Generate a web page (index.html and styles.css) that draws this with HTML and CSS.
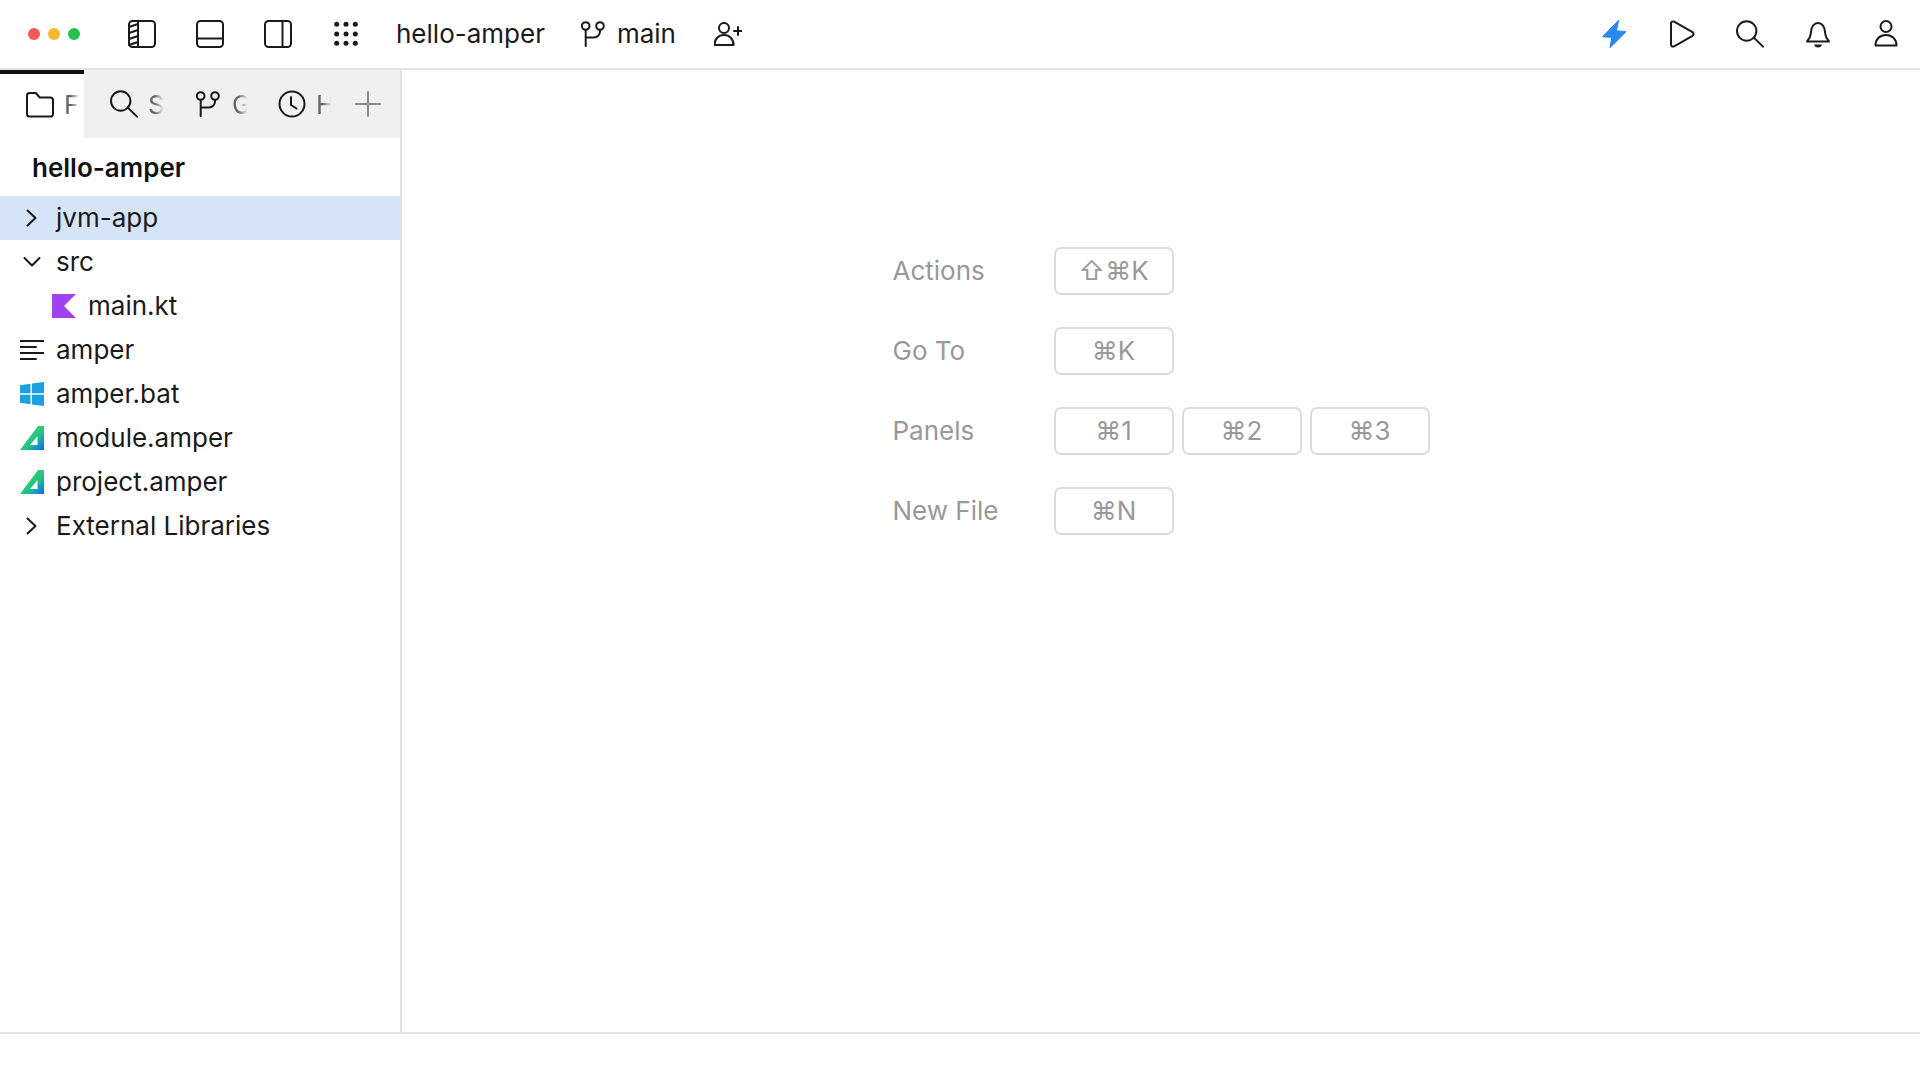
FILE: index.html
```html
<!DOCTYPE html>
<html lang="en">
<head>
<meta charset="utf-8">
<title>hello-amper</title>
<link rel="stylesheet" href="styles.css">
</head>
<body>
<svg class="defs" width="0" height="0" aria-hidden="true">
  <defs>
    <linearGradient id="amperGrad" x1="0.3" y1="0.3" x2="0.95" y2="0.95">
      <stop offset="0" stop-color="#35cf66"/>
      <stop offset="0.5" stop-color="#22bf8e"/>
      <stop offset="1" stop-color="#0f6ff8"/>
    </linearGradient>
    <symbol id="i-branch" viewBox="0 0 28 28"><circle cx="6.7" cy="6" r="3.8"/><circle cx="21" cy="6" r="3.8"/><path d="M6.7 10v16M21 10v1.5a6 6 0 0 1-6 6H6.7"/></symbol>
    <symbol id="i-search" viewBox="0 0 28 28"><circle cx="10.700" cy="11" r="9.700"/><path d="M17.800 17.600 27 26.600"/></symbol>
    <symbol id="i-amper" viewBox="0 0 24 24"><path fill="url(#amperGrad)" fill-rule="evenodd" d="M0 24 18 0h6v24ZM10 19h7.500v-9Z"/></symbol>
    <symbol id="i-right" viewBox="0 0 24 24"><path d="M7.5 4.5 15.5 12l-8 7.5"/></symbol>
  </defs>
</svg>
<div class="app">
  <header class="topbar">
    <div class="lights"><i class="light red"></i><i class="light yellow"></i><i class="light green"></i></div>
    <button class="tool">
      <svg class="ico" viewBox="0 0 28 28"><rect x="1" y="1" width="26" height="26" rx="3.5"/><path d="M10 1v26M1 7l9-3M1 13l9-3M1 19l9-3M1 25l9-3"/></svg>
    </button>
    <button class="tool">
      <svg class="ico" viewBox="0 0 28 28"><rect x="1" y="1" width="26" height="26" rx="3.5"/><path d="M1 18.500h26"/></svg>
    </button>
    <button class="tool">
      <svg class="ico" viewBox="0 0 28 28"><rect x="1" y="1" width="26" height="26" rx="3.5"/><path d="M18.500 1v26"/></svg>
    </button>
    <button class="tool">
      <svg class="ico solid" viewBox="0 0 28 28"><circle cx="4.700" cy="4.300" r="2.500"/><circle cx="14" cy="4.300" r="2.500"/><circle cx="23.300" cy="4.300" r="2.500"/><circle cx="4.700" cy="14" r="2.500"/><circle cx="14" cy="14" r="2.500"/><circle cx="23.300" cy="14" r="2.500"/><circle cx="4.700" cy="23.300" r="2.500"/><circle cx="14" cy="23.300" r="2.500"/><circle cx="23.300" cy="23.300" r="2.500"/></svg>
    </button>
    <span class="project">hello-amper</span>
    <button class="tool"><svg class="ico"><use href="#i-branch"/></svg></button>
    <span class="branch">main</span>
    <button class="tool">
      <svg class="ico" viewBox="0 0 28 28"><circle cx="10" cy="8" r="5"/><path d="M.5 25c0-6 4-10 9.500-10s9.500 4 9.500 10ZM24 7v8M20 11h8"/></svg>
    </button>
    <div class="spacer"></div>
    <button class="tool">
      <svg class="ico bolt" viewBox="0 0 28 28"><path d="M18.500.5 2.500 16.700l9.200.7-1.700 10.300L26 11.700l-9.300-1Z"/></svg>
    </button>
    <button class="tool">
      <svg class="ico" viewBox="0 0 28 28"><path d="M3 3.500c0-1.600 1.700-2.600 3.100-1.800l18.400 10.500c1.300.8 1.300 2.800 0 3.600L6.100 26.300C4.700 27.100 3 26.100 3 24.500Z"/></svg>
    </button>
    <button class="tool"><svg class="ico"><use href="#i-search"/></svg></button>
    <button class="tool">
      <svg class="ico" viewBox="0 0 28 28"><path d="M3 21.500c0-1 3-2 3.700-7.500.5-4 .5-6 2.300-8.300C10.300 4 12 3 14 3s3.700 1 5 2.700c1.800 2.300 1.800 4.300 2.300 8.300.7 5.500 3.700 6.500 3.700 7.500Z"/><path class="fill" d="M10 24.500h8c-.5 2-2 3-4 3s-3.500-1-4-3Z"/></svg>
    </button>
    <button class="tool">
      <svg class="ico" viewBox="0 0 28 28"><circle cx="14" cy="6.500" r="5.500"/><path d="M3.500 25.500c0-6.500 4.500-10.500 10.500-10.500s10.500 4 10.500 10.500Z"/></svg>
    </button>
  </header>

  <div class="workspace">
    <aside class="sidebar">
      <nav class="tabs">
        <div class="tab active">
          <svg class="ico" viewBox="0 0 28 28"><path d="M1 5.500C1 4 2 3 3.500 3h6.300l4 4.500h10.700c1.500 0 2.500 1 2.500 2.500v14c0 1.500-1 2.500-2.500 2.500h-21C2 26.500 1 25.500 1 24Z"/></svg>
          <span class="tab-label">Files</span>
        </div>
        <div class="tab"><svg class="ico"><use href="#i-search"/></svg><span class="tab-label">Search</span></div>
        <div class="tab"><svg class="ico"><use href="#i-branch"/></svg><span class="tab-label">Git</span></div>
        <div class="tab">
          <svg class="ico" viewBox="0 0 28 28"><circle cx="14" cy="14" r="12.500"/><path d="M13 7v8l5.500 3.500"/></svg>
          <span class="tab-label">History</span>
        </div>
        <div class="add">
          <svg class="ico muted" viewBox="0 0 28 28"><path d="M14 2v24M2 14h24"/></svg>
        </div>
      </nav>
      <div class="tree-title">hello-amper</div>
      <ul class="tree">
        <li class="row selected">
          <svg class="ficon stroke"><use href="#i-right"/></svg>
          <span class="row-text">jvm-app</span>
        </li>
        <li class="row">
          <svg class="ficon stroke" viewBox="0 0 24 24"><path d="M4.500 8 12 15.500 19.500 8"/></svg>
          <span class="row-text">src</span>
        </li>
        <li class="row child">
          <svg class="ficon" viewBox="0 0 24 24"><path class="kotlin" d="M0 0h24L12 12l12 12H0Z"/></svg>
          <span class="row-text">main.kt</span>
        </li>
        <li class="row">
          <svg class="ficon stroke" viewBox="0 0 24 24"><path d="M0 3h24M0 9h16M0 15h24M0 21h16"/></svg>
          <span class="row-text">amper</span>
        </li>
        <li class="row">
          <svg class="ficon" viewBox="0 0 24 24"><path class="win" d="M0 3.300 10.500 1.800v9.400H0ZM12 1.600 24 0v11.200H12ZM0 12.800h10.500v9.400L0 20.700ZM12 12.800h12V24l-12-1.600Z"/></svg>
          <span class="row-text">amper.bat</span>
        </li>
        <li class="row">
          <svg class="ficon"><use href="#i-amper"/></svg>
          <span class="row-text">module.amper</span>
        </li>
        <li class="row">
          <svg class="ficon"><use href="#i-amper"/></svg>
          <span class="row-text">project.amper</span>
        </li>
        <li class="row">
          <svg class="ficon stroke"><use href="#i-right"/></svg>
          <span class="row-text">External Libraries</span>
        </li>
      </ul>
    </aside>
    <main class="main">
      <div class="shortcuts">
        <span class="sc-label">Actions</span>
        <div class="keys"><kbd class="key">⇧⌘K</kbd></div>
        <span class="sc-label">Go To</span>
        <div class="keys"><kbd class="key">⌘K</kbd></div>
        <span class="sc-label">Panels</span>
        <div class="keys"><kbd class="key">⌘1</kbd><kbd class="key">⌘2</kbd><kbd class="key">⌘3</kbd></div>
        <span class="sc-label">New File</span>
        <div class="keys"><kbd class="key">⌘N</kbd></div>
      </div>
    </main>
  </div>
  <footer class="statusbar"></footer>
</div>
</body>
</html>
```
FILE: styles.css
```css
* { box-sizing: border-box; }
html, body { margin: 0; height: 100%; }
body {
  background: #fff;
  color: #1a1a1a;
  font-family: Inter, "Noto Sans", "Liberation Sans", "DejaVu Sans", sans-serif;
  font-size: 26px;
  overflow: hidden;
}
.defs { position: absolute; }
.app { display: flex; flex-direction: column; height: 100vh; }

.topbar {
  display: flex;
  align-items: center;
  height: 70px;
  flex: none;
  border-bottom: 2px solid #e4e4e4;
}
.lights { display: flex; align-items: center; gap: 8px; width: 108px; padding-left: 28px; }
.light { width: 12px; height: 12px; border-radius: 50%; }
.red { background: #f25a57; }
.yellow { background: #f5b82e; }
.green { background: #27c24c; }
.tool {
  display: flex;
  align-items: center;
  justify-content: center;
  width: 68px;
  height: 68px;
  padding: 0;
  border: 0;
  background: none;
}
.ico {
  width: 28px;
  height: 28px;
  flex: none;
  fill: none;
  stroke: #1a1a1a;
  stroke-width: 2;
  stroke-linejoin: round;
  stroke-linecap: round;
}
.ico.solid { fill: #1a1a1a; stroke: none; }
.ico.bolt { fill: #2a87f0; stroke: #2a87f0; stroke-width: 1; }
.ico.muted { stroke: #8a8a8a; }
.ico .fill { fill: #1a1a1a; stroke: none; }
.project { margin: 0 14px 2px 16px; }
.branch { margin: 0 18px 2px -10px; }
.spacer { flex: 1; }

.workspace { display: flex; flex: 1; min-height: 0; }
.sidebar {
  display: flex;
  flex-direction: column;
  width: 402px;
  flex: none;
  border-right: 2px solid #e4e4e4;
}
.tabs { display: flex; height: 68px; flex: none; background: #f0f0f0; }
.tab {
  display: flex;
  align-items: center;
  gap: 10px;
  width: 84px;
  flex: none;
  padding-left: 26px;
  overflow: hidden;
}
.tab.active { background: #fff; border-top: 4px solid #111; padding-bottom: 4px; }
.tab-label {
  width: 22px;
  flex: none;
  overflow: hidden;
  white-space: nowrap;
  color: #666;
  -webkit-mask-image: linear-gradient(to right, #000 30%, transparent 70%);
  mask-image: linear-gradient(to right, #000 30%, transparent 70%);
}
.add { display: flex; align-items: center; margin-left: 18px; }

.tree-title { height: 58px; padding-left: 32px; font-weight: 600; line-height: 60px; color: #111; }
.tree { list-style: none; margin: 0; padding: 0; }
.row {
  display: flex;
  align-items: center;
  gap: 12px;
  height: 44px;
  padding-left: 20px;
}
.row.child { padding-left: 52px; }
.row.selected { background: #d6e4fa; }
.row-text { margin-bottom: 2px; }
.ficon { width: 24px; height: 24px; flex: none; }
.ficon.stroke { fill: none; stroke: #1a1a1a; stroke-width: 2; stroke-linecap: round; stroke-linejoin: round; }
.kotlin { fill: #a142f0; }
.win { fill: #1ba1e2; }

.main { flex: 1; min-width: 0; display: flex; justify-content: center; padding-top: 177px; }
.shortcuts {
  display: grid;
  grid-template-columns: 161px 1fr;
  row-gap: 32px;
  align-content: start;
  align-items: center;
  color: #999;
}
.sc-label { color: #999; margin-bottom: 2px; }
.keys { display: flex; gap: 8px; }
.key {
  display: flex;
  align-items: center;
  justify-content: center;
  width: 120px;
  height: 48px;
  padding-bottom: 1px;
  border: 2px solid #dcdcdc;
  border-radius: 7px;
  font: inherit;
  color: #999;
}

.statusbar { height: 48px; flex: none; border-top: 2px solid #e4e4e4; background: #fefefe; }
```
